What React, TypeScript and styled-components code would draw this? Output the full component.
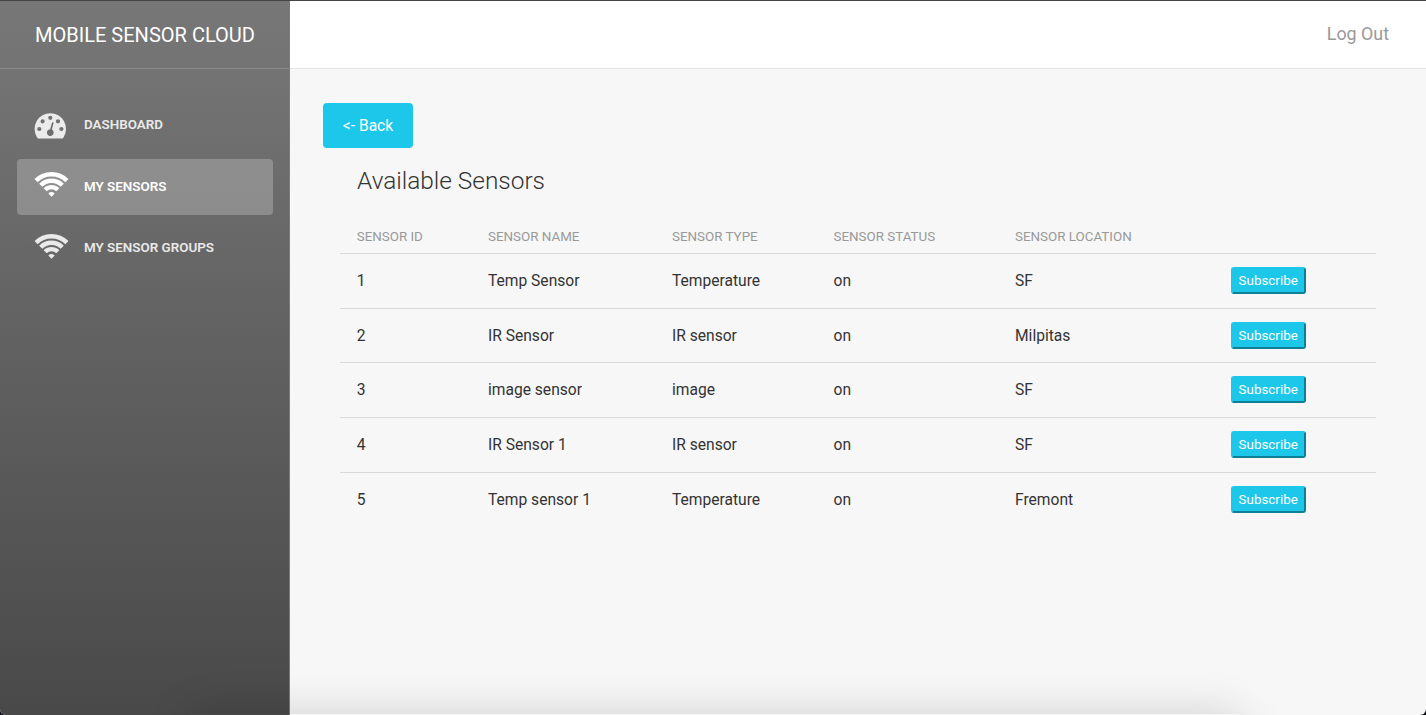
import React from "react";
import styled, { createGlobalStyle } from "styled-components";

const Global = createGlobalStyle`
  * { box-sizing: border-box; }
  body { margin: 0; background: #14161c; font-family: Roboto, "Liberation Sans", sans-serif; color: #333; }
`;

const Page = styled.div`
  position: relative;
  display: flex;
  height: 715px;
  overflow: hidden;
  background: #f7f7f7;
  border-top: 1px solid #454345;
  border-radius: 0 0 6px 6px;
`;

const Sidebar = styled.aside`
  width: 290px;
  flex: none;
  background: linear-gradient(#777 0%, #737373 10%, #494949 100%);
  border-right: 1px solid #7b7b7b;
`;

const Brand = styled.div`
  height: 68px;
  padding-left: 35px;
  border-bottom: 1px solid #8b8b8b;
  color: #fff;
  font-size: 20.05px;
  line-height: 68px;
  white-space: nowrap;
`;

const Menu = styled.nav`
  display: flex;
  flex-direction: column;
  gap: 5.5px;
  padding: 28.5px 16px 0 17px;
`;

const MenuItem = styled.a<{ $active?: boolean }>`
  display: flex;
  align-items: center;
  height: 56px;
  padding-left: 17px;
  border-radius: 4px;
  color: #fff;
  font-size: 13.4px;
  font-weight: 600;
  background: ${(p) => (p.$active ? "rgba(255,255,255,0.23)" : "transparent")};
  & > * { opacity: ${(p) => (p.$active ? 1 : 0.86)}; }
`;

const MenuLabel = styled.span`
  padding-bottom: 2px;
`;

const Icon = styled.svg<{ $lift?: number }>`
  width: 35px;
  height: 28px;
  margin: 0 15px ${(p) => (p.$lift ?? 0) * 2}px 0;
  flex: none;
  overflow: visible;
`;

const Main = styled.main`
  flex: 1;
  min-width: 0;
`;

const Header = styled.header`
  display: flex;
  justify-content: flex-end;
  height: 68px;
  padding-right: 37px;
  background: #fff;
  border-bottom: 1px solid #e4e4e4;
  color: #999;
  font-size: 17.85px;
  line-height: 66px;
`;

const Content = styled.div`
  padding: 34px 50px 0 33px;
`;

const BackButton = styled.button`
  display: block;
  width: 90px;
  height: 45px;
  padding: 0;
  border: 0;
  border-radius: 4px;
  background: #1dc7ea;
  color: #fff;
  font: 400 15.6px Roboto, sans-serif;
`;

const Title = styled.h4`
  margin: 17px 0 0 34px;
  font-size: 24.4px;
  line-height: 32px;
  font-weight: 300;
`;

const Table = styled.table`
  width: 1036px;
  margin: 24px 0 0 17px;
  table-layout: fixed;
  border-collapse: separate;
  border-spacing: 0;
`;

const Th = styled.th<{ $w: number }>`
  width: ${(p) => p.$w}px;
  height: 33px;
  padding: 0 0 2px 16.7px;
  border-bottom: 1px solid #dadada;
  color: #999;
  font-size: 13.38px;
  font-weight: 400;
  text-align: left;
`;

const Td = styled.td`
  height: 54.7px;
  padding: 0 0 0 16.7px;
  font-size: 15.6px;
  tr:not(:last-child) > & { border-bottom: 1px solid #dadada; }
`;

const ActionCell = styled(Td)`
  padding-bottom: 1px;
`;

const Subscribe = styled.button`
  display: block;
  width: 75px;
  height: 27px;
  padding: 0;
  border: 2px solid;
  border-color: #1dc7ea #0f7f96 #0f7f96 #1dc7ea;
  border-radius: 3px;
  background: #1dc7ea;
  color: #fff;
  font: 400 13.4px Roboto, sans-serif;
`;

const DockShadow = styled.div`
  position: absolute;
  left: 190px;
  right: 186px;
  top: 713px;
  height: 60px;
  box-shadow: 0 0 46px rgba(0, 0, 0, 0.16);
  pointer-events: none;
`;

const Gauge = () => (
  <Icon viewBox="0 0 35 28">
    <path
      fillRule="evenodd"
      fill="#fff"
      d="M4.2 26.4Q3.4 26.4 2.7 24.8A15.7 15.7 0 1 1 29.9 24.8Q29.2 26.4 28.4 26.4Z
      M3.2 17a2.1 2.1 0 1 0 4.2 0a2.1 2.1 0 1 0-4.2 0Z
      M6.5 9.3a2.1 2.1 0 1 0 4.2 0a2.1 2.1 0 1 0-4.2 0Z
      M14.2 5.8a2.1 2.1 0 1 0 4.2 0a2.1 2.1 0 1 0-4.2 0Z
      M21.9 9.3a2.1 2.1 0 1 0 4.2 0a2.1 2.1 0 1 0-4.2 0Z
      M25.3 17a2.1 2.1 0 1 0 4.2 0a2.1 2.1 0 1 0-4.2 0Z
      M18.1 10.6L16.1 17.2A3.4 3.4 0 1 0 17.9 17.6L19.6 11Q19.5 9.8 18.1 10.6Z"
    />
  </Icon>
);

const Wifi = () => (
  <Icon viewBox="0 0 35 28" $lift={1.8}>
    <g fill="none" stroke="#fff" strokeWidth="4.4">
      <path d="M2.1 9.6A21.8 21.8 0 0 1 32.9 9.6" />
      <path d="M6.75 14.25A15.2 15.2 0 0 1 28.25 14.25" />
      <path d="M11.2 18.7A8.9 8.9 0 0 1 23.8 18.7" />
    </g>
    <path fill="#fff" d="M17.5 25.7L14.3 22.4Q17.5 19.8 20.7 22.4Z" />
  </Icon>
);

const columns: [string, number][] = [
  ["SENSOR ID", 131.3],
  ["SENSOR NAME", 184],
  ["SENSOR TYPE", 161.5],
  ["SENSOR STATUS", 181.5],
  ["SENSOR LOCATION", 215.7],
  ["", 162],
];

const sensors = [
  ["1", "Temp Sensor", "Temperature", "on", "SF"],
  ["2", "IR Sensor", "IR sensor", "on", "Milpitas"],
  ["3", "image sensor", "image", "on", "SF"],
  ["4", "IR Sensor 1", "IR sensor", "on", "SF"],
  ["5", "Temp sensor 1", "Temperature", "on", "Fremont"],
];

export default function App() {
  return (
    <Page>
      <Global />
      <Sidebar>
        <Brand>MOBILE SENSOR CLOUD</Brand>
        <Menu>
          <MenuItem><Gauge /><MenuLabel>DASHBOARD</MenuLabel></MenuItem>
          <MenuItem $active><Wifi /><MenuLabel>MY SENSORS</MenuLabel></MenuItem>
          <MenuItem><Wifi /><MenuLabel>MY SENSOR GROUPS</MenuLabel></MenuItem>
        </Menu>
      </Sidebar>
      <Main>
        <Header><span>Log Out</span></Header>
        <Content>
          <BackButton>&lt;- Back</BackButton>
          <Title>Available Sensors</Title>
          <Table>
            <thead>
              <tr>{columns.map(([name, w], i) => <Th key={i} $w={w}>{name}</Th>)}</tr>
            </thead>
            <tbody>
              {sensors.map((row) => (
                <tr key={row[0]}>
                  {row.map((cell, i) => <Td key={i}>{cell}</Td>)}
                  <ActionCell><Subscribe>Subscribe</Subscribe></ActionCell>
                </tr>
              ))}
            </tbody>
          </Table>
        </Content>
      </Main>
      <DockShadow />
    </Page>
  );
}
